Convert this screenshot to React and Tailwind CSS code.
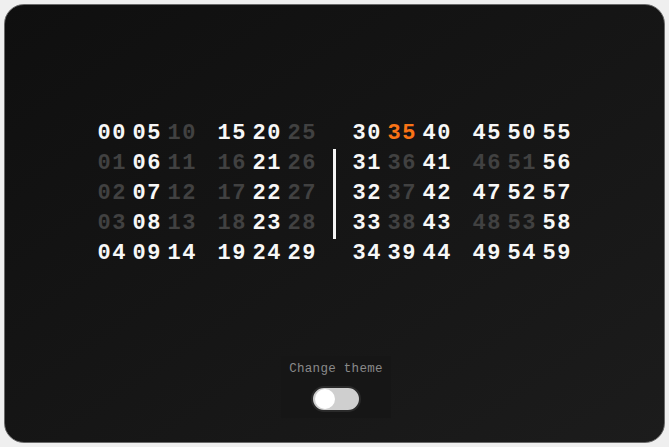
import React from "react";

const W = "text-[#f7f7f7]";
const G = "text-[#414141]";
const O = "text-[#f97316]";

const group = (start) => {
  const rows = [];
  for (let r = 0; r < 5; r++) {
    const row = [];
    for (let c = 0; c < 3; c++) {
      row.push(start + c * 5 + r);
    }
    rows.push(row);
  }
  return rows;
};

const white = new Set([0, 5, 15, 20, 6, 21, 7, 22, 8, 23, 4, 9, 14, 19, 24, 29, 30, 40, 45, 50, 55, 31, 41, 56, 32, 42, 47, 52, 57, 33, 43, 58, 34, 39, 44, 49, 54, 59]);

function Cell({ n }) {
  const cls = n === 35 ? O : white.has(n) ? W : G;
  return (
    <span className={`w-[29px] text-left ${cls}`}>{String(n).padStart(2, "0")}</span>
  );
}

function Group({ start }) {
  const rows = group(start);
  return (
    <div className="flex flex-col">
      {rows.map((row, i) => (
        <div key={i} className="flex gap-[6px] h-[30px] items-center">
          {row.map((n) => (
            <Cell key={n} n={n} />
          ))}
        </div>
      ))}
    </div>
  );
}

export default function App() {
  return (
    <div className="w-[669px] h-[447px] bg-[#efefef] p-[4px]">
      <div className="w-full h-full rounded-[20px] border border-[#6a6a6a] bg-gradient-to-br from-[#0f0f0f] to-[#1c1c1c] flex flex-col items-center">
        <div
          className="mt-[114px] flex items-center font-bold text-[22px] tracking-[1.5px] leading-[30px]"
          style={{ fontFamily: '"Liberation Mono", "DejaVu Sans Mono", monospace' }}
        >
          <div className="flex gap-[21px]">
            <Group start={0} />
            <Group start={15} />
          </div>
          <div className="w-[3px] h-[90px] bg-[#f5f5f5] ml-[16px] mr-[17px]" />
          <div className="flex gap-[21px]">
            <Group start={30} />
            <Group start={45} />
          </div>
        </div>
        <div className="mt-[87px] ml-[3px] w-[110px] h-[62px] bg-[#161616] flex flex-col items-center">
          <div
            className="mt-[6px] text-[12.5px] leading-[14px] text-[#8a8a8a] tracking-[0.3px]"
            style={{ fontFamily: '"Liberation Mono", "DejaVu Sans Mono", monospace' }}
          >
            Change theme
          </div>
          <div className="mt-[10px] w-[50px] h-[26px] rounded-full bg-[#cfcfcf] border-[2px] border-[#2a2a2a] flex items-center px-[2px]">
            <div className="w-[20px] h-[20px] rounded-full bg-white" />
          </div>
        </div>
      </div>
    </div>
  );
}
